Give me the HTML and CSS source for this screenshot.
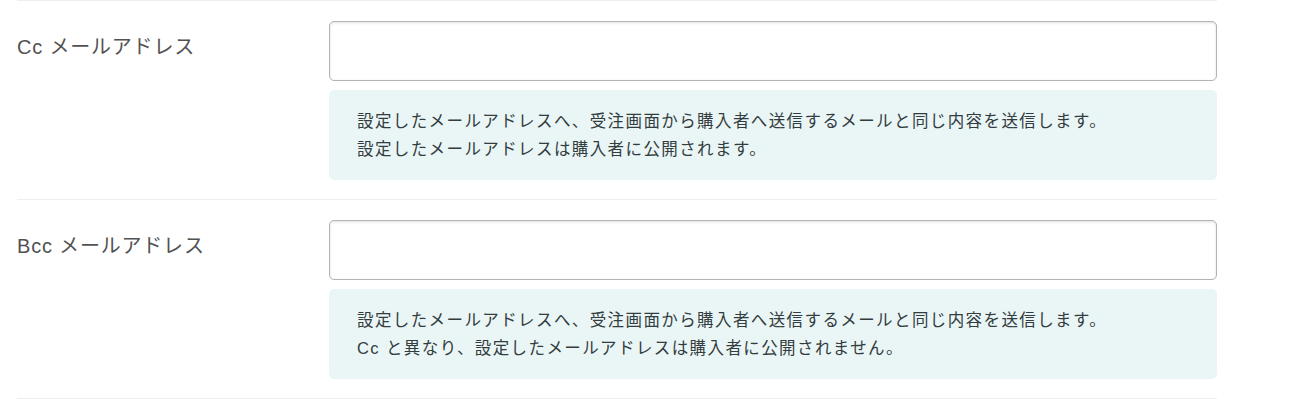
FILE: index.html
```html
<!DOCTYPE html>
<html lang="ja">
<head>
<meta charset="utf-8">
<link rel="stylesheet" href="styles.css">
</head>
<body>
<div class="form">
  <div class="row">
    <div class="label">Cc メールアドレス</div>
    <div class="field">
      <input class="input" type="text">
      <div class="help">
        <p>設定したメールアドレスへ、受注画面から購入者へ送信するメールと同じ内容を送信します。</p>
        <p>設定したメールアドレスは購入者に公開されます。</p>
      </div>
    </div>
  </div>
  <div class="row">
    <div class="label">Bcc メールアドレス</div>
    <div class="field">
      <input class="input" type="text">
      <div class="help">
        <p>設定したメールアドレスへ、受注画面から購入者へ送信するメールと同じ内容を送信します。</p>
        <p>Cc と異なり、設定したメールアドレスは購入者に公開されません。</p>
      </div>
    </div>
  </div>
  <div class="end"></div>
</div>
</body>
</html>
```

FILE: styles.css
```css
html, body {
  margin: 0;
  padding: 0;
  background: #fff;
}
body {
  font-family: "Liberation Sans", "Noto Sans CJK JP", sans-serif;
}
.form {
  width: 1200px;
  margin-left: 17px;
}
.row {
  display: flex;
  border-top: 1px solid #efefef;
  padding: 20px 0 19px;
}
.end {
  border-top: 1px solid #efefef;
}
.label {
  width: 312px;
  flex: none;
  font-size: 20px;
  letter-spacing: 0.8px;
  line-height: 28px;
  padding-top: 12px;
  color: #525252;
}
.field {
  flex: 1;
  display: flex;
  flex-direction: column;
  gap: 9px;
}
.input {
  box-sizing: border-box;
  display: block;
  width: 100%;
  height: 60px;
  margin: 0;
  border: 1px solid #b3b3b3;
  border-radius: 5px;
  box-shadow: inset 0 1px 3px rgba(0,0,0,0.12);
  background: #fff;
  outline: none;
}
.help {
  box-sizing: border-box;
  height: 90px;
  background: #eaf6f6;
  border-radius: 5px;
  padding: 17px 28px;
  color: #333c3e;
  font-size: 16.5px;
  line-height: 28px;
  letter-spacing: 1.4px;
}
.help p {
  margin: 0;
}
```
